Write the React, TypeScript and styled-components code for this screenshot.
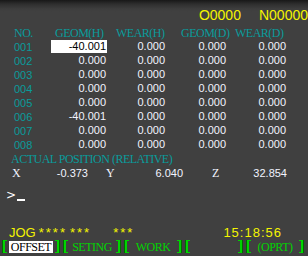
import React from 'react';
import styled, { createGlobalStyle } from 'styled-components';

const Global = createGlobalStyle`
  html, body {
    margin: 0;
    padding: 0;
    background: #404040;
  }
`;

const TEAL = '#0a9c9c';
const YELLOW = '#f4f400';
const GREEN = '#00d400';
const VALUE = '#f2f4ff';

const Screen = styled.div`
  width: 308px;
  height: 256px;
  overflow: hidden;
  background: linear-gradient(#181818 0px, #2e2e2e 4px, #3e3e3e 9px, #404040 12px);
  font-family: 'Liberation Sans', Arial, sans-serif;
  display: flex;
  flex-direction: column;
`;

const TopBar = styled.div`
  height: 26px;
  padding-top: 8px;
  box-sizing: border-box;
  display: flex;
  justify-content: flex-end;
  gap: 18px;
  color: ${YELLOW};
  font-size: 14px;
  line-height: 14px;
`;

const Table = styled.div`
  display: grid;
  grid-template-columns: 37px 56px 59px 61px 60px;
  grid-auto-rows: 14px;
  padding-left: 14px;
`;

const HeadCell = styled.div<{ $offset?: number }>`
  font-family: 'Liberation Serif', 'Times New Roman', serif;
  font-size: 12px;
  letter-spacing: -0.5px;
  line-height: 14px;
  color: ${TEAL};
  white-space: nowrap;
  padding-left: ${p => p.$offset ?? 0}px;
`;

const NoCell = styled.div`
  font-size: 11px;
  line-height: 14px;
  color: ${TEAL};
`;

const ValueCell = styled.div<{ $active?: boolean }>`
  font-size: 11px;
  line-height: 13px;
  height: 13px;
  text-align: right;
  padding-right: 1px;
  color: ${p => (p.$active ? '#000' : VALUE)};
  background: ${p => (p.$active ? '#fff' : 'transparent')};
`;

const Caption = styled.div`
  font-family: 'Liberation Serif', 'Times New Roman', serif;
  font-size: 12px;
  letter-spacing: -0.5px;
  line-height: 14px;
  color: ${TEAL};
  padding-left: 11px;
`;

const AxisRow = styled.div`
  display: flex;
  padding-left: 12px;
  height: 15px;
  align-items: center;
`;

const Axis = styled.div<{ $width: number; $pad: number }>`
  width: ${p => p.$width}px;
  padding-right: ${p => p.$pad}px;
  box-sizing: border-box;
  display: flex;
  justify-content: space-between;
  align-items: baseline;
  color: ${VALUE};
`;

const AxisName = styled.span`
  font-family: 'Liberation Serif', 'Times New Roman', serif;
  font-size: 12px;
`;

const AxisValue = styled.span`
  font-size: 11px;
`;

const Prompt = styled.div`
  display: flex;
  align-items: flex-end;
  padding-left: 6px;
  height: 21px;
  color: #fff;
  font-family: 'DejaVu Sans', sans-serif;
  font-size: 12px;
  line-height: 14px;
`;

const Cursor = styled.span`
  display: inline-block;
  width: 8px;
  height: 2px;
  background: #fff;
  margin: 0 0 1px 1px;
`;

const Spacer = styled.div`
  flex: 1;
`;

const StatusRow = styled.div`
  display: flex;
  align-items: center;
  height: 14px;
  padding-left: 9px;
  padding-right: 26px;
  color: ${YELLOW};
  font-size: 13px;
`;

const Mode = styled.span`
  font-size: 13px;
  line-height: 14px;
`;

const Stars = styled.span<{ $gap: number }>`
  margin-left: ${p => p.$gap}px;
  letter-spacing: 2px;
  font-size: 13px;
  line-height: 14px;
`;

const Clock = styled.span`
  margin-left: auto;
  letter-spacing: 1px;
  font-size: 13px;
  line-height: 14px;
`;

const SoftKeys = styled.div`
  display: flex;
  gap: 5px;
  padding-left: 3px;
  height: 16px;
  align-items: flex-start;
`;

const Key = styled.div`
  width: 56px;
  display: flex;
  align-items: center;
  height: 13px;
`;

const Bracket = styled.span<{ $side: 'left' | 'right' }>`
  width: 2px;
  height: 11px;
  border: 1px solid ${GREEN};
  border-${p => (p.$side === 'left' ? 'right' : 'left')}: none;
  ${p => (p.$side === 'left' ? 'border-left-width: 2px;' : 'border-right-width: 2px;')}
  box-shadow: ${p => (p.$side === 'left' ? '-1px 0 0 #006a00' : '1px 0 0 #006a00')};
  flex: none;
`;

const KeyLabel = styled.span<{ $active?: boolean }>`
  flex: 1;
  display: flex;
  justify-content: center;
  font-family: 'Liberation Serif', 'Times New Roman', serif;
  font-size: 12px;
  letter-spacing: -0.5px;
  line-height: 12px;
  color: ${p => (p.$active ? '#000' : GREEN)};
  & > span {
    background: ${p => (p.$active ? '#fff' : 'transparent')};
    padding: 0 2px;
  }
`;

const rows = [
  ['001', '-40.001', '0.000', '0.000', '0.000'],
  ['002', '0.000', '0.000', '0.000', '0.000'],
  ['003', '0.000', '0.000', '0.000', '0.000'],
  ['004', '0.000', '0.000', '0.000', '0.000'],
  ['005', '0.000', '0.000', '0.000', '0.000'],
  ['006', '-40.001', '0.000', '0.000', '0.000'],
  ['007', '0.000', '0.000', '0.000', '0.000'],
  ['008', '0.000', '0.000', '0.000', '0.000'],
];

const keys = [
  { label: 'OFFSET', active: true },
  { label: 'SETING' },
  { label: 'WORK' },
  { label: '' },
  { label: '(OPRT)' },
];

const App = () => (
  <Screen>
    <Global />
    <TopBar>
      <span>O0000</span>
      <span>N00000</span>
    </TopBar>

    <Table>
      <HeadCell>NO.</HeadCell>
      <HeadCell $offset={4}>GEOM(H)</HeadCell>
      <HeadCell $offset={9}>WEAR(H)</HeadCell>
      <HeadCell $offset={15}>GEOM(D)</HeadCell>
      <HeadCell $offset={8}>WEAR(D)</HeadCell>
      {rows.map((row, i) => (
        <React.Fragment key={row[0]}>
          <NoCell>{row[0]}</NoCell>
          {row.slice(1).map((v, j) => (
            <ValueCell key={j} $active={i === 0 && j === 0}>
              {v}
            </ValueCell>
          ))}
        </React.Fragment>
      ))}
    </Table>

    <Caption>ACTUAL POSITION (RELATIVE)</Caption>
    <AxisRow>
      <Axis $width={94} $pad={18}>
        <AxisName>X</AxisName>
        <AxisValue>-0.373</AxisValue>
      </Axis>
      <Axis $width={106} $pad={29}>
        <AxisName>Y</AxisName>
        <AxisValue>6.040</AxisValue>
      </Axis>
      <Axis $width={75} $pad={0}>
        <AxisName>Z</AxisName>
        <AxisValue>32.854</AxisValue>
      </Axis>
    </AxisRow>

    <Prompt>
      &gt;<Cursor />
    </Prompt>

    <Spacer />

    <StatusRow>
      <Mode>JOG</Mode>
      <Stars $gap={3}>****</Stars>
      <Stars $gap={3}>***</Stars>
      <Stars $gap={22}>***</Stars>
      <Clock>15:18:56</Clock>
    </StatusRow>

    <SoftKeys>
      {keys.map((k, i) => (
        <Key key={i}>
          <Bracket $side="left" />
          <KeyLabel $active={k.active}>
            <span>{k.label}</span>
          </KeyLabel>
          <Bracket $side="right" />
        </Key>
      ))}
    </SoftKeys>
  </Screen>
);

export default App;
